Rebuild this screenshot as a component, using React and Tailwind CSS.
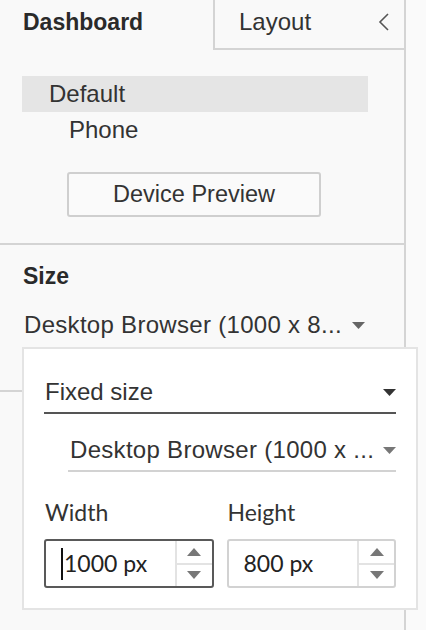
import React from 'react';

const sans = { fontFamily: '"Liberation Sans", Arial, sans-serif' };
const lato = { fontFamily: 'Lato, "Liberation Sans", sans-serif' };

function Caret({ color = '#666' }) {
  return (
    <svg width="13" height="7" viewBox="0 0 13 7" className="shrink-0">
      <path d="M0 0 L13 0 L6.5 7 Z" fill={color} />
    </svg>
  );
}

function Spin({ up }) {
  return (
    <svg width="14" height="8" viewBox="0 0 14 8">
      <path d={up ? 'M0 8 L14 8 L7 0 Z' : 'M0 0 L14 0 L7 8 Z'} fill="#777" />
    </svg>
  );
}

function NumberBox({ value, active }) {
  return (
    <div
      className={`flex h-[49px] rounded-[3px] border-2 bg-white ${
        active ? 'border-[#595959]' : 'border-[#d2d2d2]'
      }`}
    >
      <div className="flex flex-1 items-center pl-[15px] text-[23px] text-[#222]" style={lato}>
        {active && <span className="mr-[1px] h-[32px] w-[2px] bg-[#111]" />}
        {value}
      </div>
      <div className="flex w-[37px] flex-col border-l-2 border-[#e3e3e3]">
        <div className="flex flex-1 items-center justify-center border-b-2 border-[#e3e3e3]">
          <Spin up />
        </div>
        <div className="flex flex-1 items-center justify-center">
          <Spin />
        </div>
      </div>
    </div>
  );
}

export default function App() {
  return (
    <div className="relative h-[630px] w-[426px] overflow-hidden bg-[#fafafa] text-[#333]" style={sans}>
      <div className="h-full w-[406px] border-r-2 border-[#d4d4d4] bg-[#f9f9f9]">
        {/* tabs */}
        <div className="flex h-[50px]">
          <div className="flex w-[213px] items-center pl-[23px] pb-[6px] text-[23px] font-bold text-[#2a2a2a]">
            Dashboard
          </div>
          <div className="flex flex-1 items-center justify-between border-b-2 border-l-2 border-[#d4d4d4] pl-[24px] pr-[14px] pb-[4px] text-[24px]">
            <span>Layout</span>
            <svg width="12" height="20" viewBox="0 0 12 20">
              <path d="M10 2 L2 10 L10 18" fill="none" stroke="#555" strokeWidth="1.6" />
            </svg>
          </div>
        </div>

        <div className="mt-[26px] ml-[22px] flex h-[36px] w-[346px] items-center bg-[#e5e5e5] pl-[27px] text-[24px]">
          Default
        </div>
        <div className="flex h-[36px] items-center pl-[69px] text-[24px]">Phone</div>

        <button
          type="button"
          className="mt-[24px] ml-[67px] flex h-[45px] w-[254px] items-center justify-center rounded-[3px] border-2 border-[#cfcfcf] bg-[#fafafa] text-[23.5px]"
        >
          Device Preview
        </button>

        <div className="mt-[26px] border-t-2 border-[#d4d4d4]">
          <div className="flex h-[55px] items-end pl-[23px] pb-[7px] text-[23px] font-bold text-[#2a2a2a]">
            Size
          </div>
          <div className="flex h-[50px] items-center gap-[10px] pl-[24px] text-[24px] tracking-[0.3px]">
            <span>Desktop Browser (1000 x 8...</span>
            <Caret />
          </div>
        </div>
        <div className="mt-[40px] border-t-2 border-[#d4d4d4]" />
      </div>

      {/* size popover */}
      <div className="absolute left-[22px] top-[347px] w-[396px] border-2 border-[#e4e4e4] bg-white px-[20px] pt-[23px] pb-[20px] text-[24px]">
        <div className="flex h-[42px] items-center justify-between border-b-2 border-[#555] pl-[1px]">
          <span>Fixed size</span>
          <Caret color="#333" />
        </div>
        <div className="mt-[16px] ml-[24px] flex h-[42px] items-center justify-between border-b-2 border-[#d2d2d2] pl-[2px] tracking-[0.3px]">
          <span>Desktop Browser (1000 x ...</span>
          <Caret color="#777" />
        </div>
        <div className="mt-[26px] grid grid-cols-2 gap-x-[13px] text-[23px]" style={lato}>
          <div className="pl-[1px] leading-[28px]">Width</div>
          <div className="pl-[1px] leading-[28px]">Height</div>
        </div>
        <div className="mt-[13px] grid grid-cols-2 gap-x-[13px]">
          <NumberBox value="1000 px" active />
          <NumberBox value="800 px" />
        </div>
      </div>
    </div>
  );
}
